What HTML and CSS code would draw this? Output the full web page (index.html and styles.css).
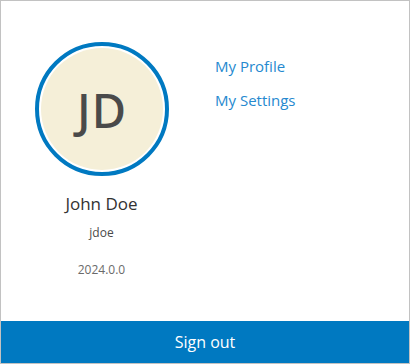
FILE: index.html
```html
<!DOCTYPE html>
<html lang="en">
  <head>
    <meta charset="UTF-8" />
    <meta name="viewport" content="width=device-width, initial-scale=1.0" />
    <title>User menu</title>
    <link rel="stylesheet" href="styles.css">
  </head>

  <body>
    <div class="panel">
      <div class="indhold">
        <section class="bruger">
          <div class="avatar">
            <span class="initialer">JD</span>
          </div>
          <p class="navn">John Doe</p>
          <p class="brugernavn">jdoe</p>
          <p class="version">2024.0.0</p>
        </section>
        <nav class="links">
          <a href="#">My Profile</a>
          <a href="#">My Settings</a>
        </nav>
      </div>
      <button class="logud">Sign out</button>
    </div>
  </body>
</html>
```

FILE: styles.css
```css
body {
  margin: 0;
  font-family: "Open Sans", "Noto Sans", sans-serif;
}
.panel {
  box-sizing: border-box;
  width: 410px;
  height: 364px;
  border: 1px solid #c2c2c2;
  display: flex;
  flex-direction: column;
  background-color: #fff;
}
.indhold {
  flex: 1;
  display: flex;
}
.bruger {
  width: 201px;
  padding-top: 41px;
  display: flex;
  flex-direction: column;
  align-items: center;
}
.avatar {
  box-sizing: border-box;
  width: 134px;
  height: 134px;
  border-radius: 50%;
  border: 4px solid #0079c1;
  padding: 2px;
  background-color: #fff;
  background-clip: content-box;
  display: flex;
  justify-content: center;
  align-items: center;
  position: relative;
}
.avatar::before {
  content: "";
  position: absolute;
  inset: 2px;
  border-radius: 50%;
  background-color: #f5efd8;
}
.initialer {
  position: relative;
  font-family: "Noto Sans", sans-serif;
  font-size: 47px;
  font-weight: 500;
  color: #4a4a4a;
  letter-spacing: 1px;
  padding-left: 1px;
  margin-top: 1px;
}
.bruger p {
  margin: 0;
}
.navn {
  margin-top: 16px !important;
  font-size: 17px;
  color: #323232;
}
.brugernavn {
  margin-top: 9px !important;
  font-size: 12px;
  color: #4a4a4a;
}
.version {
  margin-top: 20px !important;
  font-size: 12px;
  color: #6a6a6a;
}
.links {
  padding-left: 13px;
  padding-top: 55px;
  display: flex;
  flex-direction: column;
  gap: 14px;
}
.links a {
  font-size: 15px;
  line-height: 20px;
  color: #2589cf;
  text-decoration: none;
}
.logud {
  height: 42px;
  border: none;
  background-color: #0079c1;
  color: #fff;
  font-family: inherit;
  font-size: 16px;
  cursor: pointer;
}
```
